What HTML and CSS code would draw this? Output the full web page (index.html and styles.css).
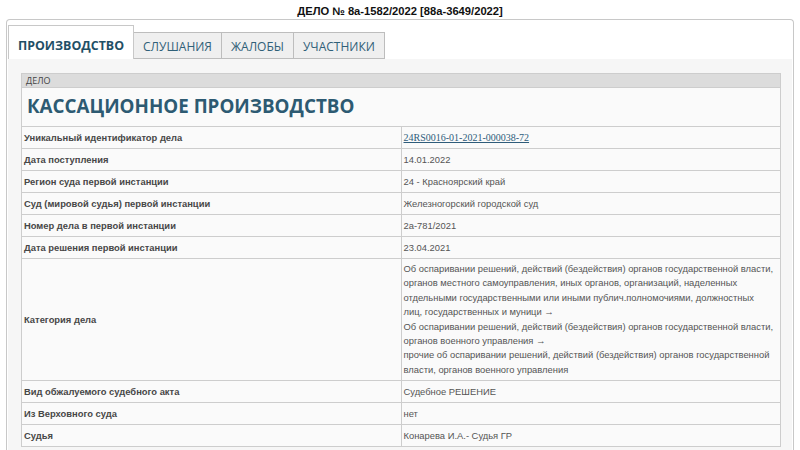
FILE: index.html
```html
<!DOCTYPE html>
<html lang="ru">
<head>
<meta charset="utf-8">
<title>ДЕЛО № 8а-1582/2022</title>
<link rel="stylesheet" href="styles.css">
</head>
<body>
<h1 class="case-title">ДЕЛО № 8а-1582/2022 [88а-3649/2022]</h1>
<div class="tabs">
  <ul class="tab-nav">
    <li class="tab active">ПРОИЗВОДСТВО</li>
    <li class="tab">СЛУШАНИЯ</li>
    <li class="tab">ЖАЛОБЫ</li>
    <li class="tab">УЧАСТНИКИ</li>
  </ul>
  <div class="panel">
    <table class="case-table">
      <tr class="head-row"><td colspan="2">ДЕЛО</td></tr>
      <tr class="title-row"><td colspan="2">КАССАЦИОННОЕ ПРОИЗВОДСТВО</td></tr>
      <tr><td class="label">Уникальный идентификатор дела</td><td class="value"><a class="uid" href="#">24RS0016-01-2021-000038-72</a></td></tr>
      <tr><td class="label">Дата поступления</td><td class="value">14.01.2022</td></tr>
      <tr><td class="label">Регион суда первой инстанции</td><td class="value">24 - Красноярский край</td></tr>
      <tr><td class="label">Суд (мировой судья) первой инстанции</td><td class="value">Железногорский городской суд</td></tr>
      <tr><td class="label">Номер дела в первой инстанции</td><td class="value">2а-781/2021</td></tr>
      <tr><td class="label">Дата решения первой инстанции</td><td class="value">23.04.2021</td></tr>
      <tr><td class="label">Категория дела</td><td class="value category">Об оспаривании решений, действий (бездействия) органов государственной власти,<br>органов местного самоуправления, иных органов, организаций, наделенных<br>отдельными государственными или иными публич.полномочиями, должностных<br>лиц, государственных и муници →<br>Об оспаривании решений, действий (бездействия) органов государственной власти,<br>органов военного управления →<br>прочие об оспаривании решений, действий (бездействия) органов государственной<br>власти, органов военного управления</td></tr>
      <tr><td class="label">Вид обжалуемого судебного акта</td><td class="value">Судебное РЕШЕНИЕ</td></tr>
      <tr><td class="label">Из Верховного суда</td><td class="value">нет</td></tr>
      <tr><td class="label">Судья</td><td class="value">Конарева И.А.- Судья ГР</td></tr>
    </table>
  </div>
</div>
</body>
</html>
```
FILE: styles.css
```css
html, body {
  margin: 0;
  padding: 0;
  background: #ffffff;
}
body {
  font-family: "Liberation Sans", Arial, sans-serif;
  overflow: hidden;
}
.case-title {
  margin: 4px 0 1px;
  font-size: 11.2px;
  line-height: 14px;
  font-weight: bold;
  text-align: center;
  color: #111;
}
.tabs {
  margin: 0 6px;
  border: 1px solid #c8c8c8;
  border-bottom: none;
  border-radius: 4px 4px 0 0;
  background: #ffffff;
  padding: 5px 1px 0 1px;
}
.tab-nav {
  list-style: none;
  margin: 0;
  padding: 0;
  display: flex;
  align-items: flex-end;
}
.tab {
  font-family: "Open Sans", sans-serif;
  font-size: 12px;
  color: #2f6078;
  background: #efefef;
  border: 1px solid #bdbdbd;
  border-left: none;
  padding: 2px 9px 0;
  line-height: 23px;
  height: 23px;
  white-space: nowrap;
}
.tab.active {
  font-weight: bold;
  font-size: 12.4px;
  color: #1f4f66;
  background: #ffffff;
  border: 1px solid #c8c8c8;
  border-bottom: none;
  padding: 8px 9px 2px;
}
.panel {
  background: #f6f6f6;
  padding: 14px 11px 10px 13px;
}
.case-table {
  width: 100%;
  border-collapse: collapse;
  background: #fafafa;
}
.case-table td {
  border: 1px solid #cdcdcd;
  padding: 3px 2px;
  line-height: 15px;
  vertical-align: middle;
}
.head-row td {
  background: #dcdcdc;
  font-family: "Open Sans", sans-serif;
  font-size: 9px;
  line-height: 13px;
  padding: 0 4px;
  color: #444;
}
.title-row td {
  font-family: "Open Sans", sans-serif;
  font-size: 18.8px;
  font-weight: bold;
  color: #2d5a72;
  line-height: 25px;
  padding: 6px 5px 7px;
}
.label {
  width: 50%;
  font-family: "Liberation Sans", Arial, sans-serif;
  font-weight: bold;
  font-size: 9.4px;
  color: #474747;
}
.value {
  font-size: 9.4px;
  color: #555;
}
.value.category {
  line-height: 14.4px;
}
.uid {
  font-family: "Liberation Serif", "Times New Roman", serif;
  font-size: 10px;
  color: #2e5c7a;
}
```
